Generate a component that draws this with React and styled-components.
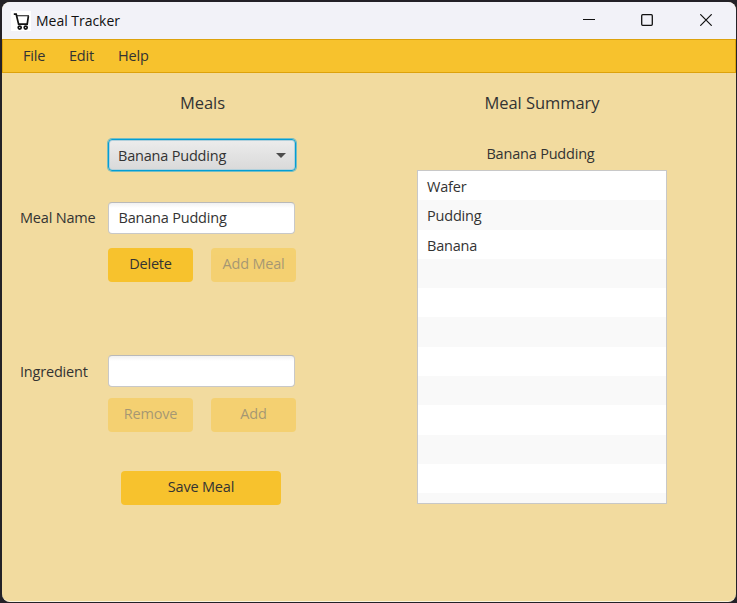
import React from "react";
import styled, { createGlobalStyle } from "styled-components";

const GlobalStyle = createGlobalStyle`
  * { box-sizing: border-box; }
  body { margin: 0; background: #232127; overflow: hidden; }
  button, input { font: inherit; color: inherit; letter-spacing: inherit; }
`;

const Desktop = styled.div`
  width: 737px;
  height: 603px;
  padding: 2px 1px 1px 2px;
  background: #232127;
  font-family: "Open Sans", "Noto Sans", sans-serif;
  font-size: 14.5px;
  line-height: 20px;
  letter-spacing: -0.2px;
  color: #333;
`;

const Window = styled.main`
  width: 734px;
  height: 600px;
  display: flex;
  flex-direction: column;
  border-radius: 8px;
  overflow: hidden;
  background: #f2db9f;
  border-bottom: 1px solid #faf3e0;
`;

const TitleBar = styled.header`
  height: 37px;
  flex: none;
  display: flex;
  align-items: center;
  padding: 0 1px 0 9px;
  background: #f2f2f8;
  color: #111;
`;

const AppIcon = styled.svg`
  width: 20px;
  height: 20px;
  margin-right: 5px;
  background: #fff;
`;

const WindowTitle = styled.span`
  flex: 1;
  font-size: 14px;
  letter-spacing: -0.03px;
`;

const WindowControl = styled.button`
  width: 58.5px;
  height: 37px;
  padding: 0 0 1px;
  border: 0;
  background: none;
  display: grid;
  place-items: center;
  svg { display: block; }
`;

const MenuBar = styled.nav`
  height: 34px;
  flex: none;
  display: flex;
  align-items: center;
  gap: 23px;
  padding: 0 20px;
  background: #f7c22d;
  border: 1px solid #dda20c;
`;

const MenuItem = styled.span`
  width: ${(p) => p.$width}px;
  white-space: nowrap;
`;

const Content = styled.div`
  flex: 1;
  display: flex;
  padding: 18px 0 0 18px;
`;

const Editor = styled.section`
  width: 276px;
  margin-right: 121px;
`;

const Heading = styled.h1`
  margin: 0;
  height: 24px;
  font-size: 16.5px;
  font-weight: 400;
  line-height: 24px;
  letter-spacing: -0.05px;
  text-align: center;
`;

const EditorHeading = styled(Heading)`
  margin: 0 0 24px 89px;
  width: 187px;
`;

const FormRow = styled.div`
  display: grid;
  grid-template-columns: 88px 188px;
  align-items: center;
  margin-bottom: ${(p) => p.$after}px;
`;

const Label = styled.label`
  white-space: nowrap;
  padding-top: ${(p) => p.$drop || 0}px;
`;

const Select = styled.div`
  grid-column: 2;
  width: 188px;
  height: 32px;
  display: flex;
  align-items: center;
  justify-content: space-between;
  padding: 1px 9px 0 9px;
  border: 1px solid #039ed3;
  border-radius: 4px;
  background: linear-gradient(#ececec, #d9d9d9);
  box-shadow: 0 0 0 1px #75bcc3, inset 0 0 0 1px #b0d0dc;
`;

const TextField = styled.input`
  width: 187px;
  height: 32px;
  padding: 0 9.5px 1px;
  border: 1px solid #c8c8c8;
  border-top-color: #b9b9b9;
  border-radius: 4px;
  outline: 0;
  background: linear-gradient(#f1f1f1, #fff 5px);
`;

const ButtonRow = styled.div`
  grid-column: 2;
  display: flex;
  gap: 18px;
`;

const Button = styled.button`
  width: ${(p) => p.$width || 85}px;
  height: 34px;
  flex: none;
  padding: 0 0 2px;
  border: 0;
  border-radius: 4px;
  background: #f7c22d;
  &:disabled { opacity: 0.4; color: #333; }
`;

const SaveArea = styled.div`
  padding-left: 101px;
`;

const Summary = styled.section`
  width: 250px;
`;

const SelectedMeal = styled.div`
  margin: 29px 0 6px;
  text-align: center;
  padding-right: 3px;
`;

const IngredientList = styled.ul`
  height: 334px;
  margin: 0;
  padding: 0;
  list-style: none;
  overflow: hidden;
  border: 1px solid #c8c8c8;
  background: #fff;
`;

const Ingredient = styled.li`
  height: 29.3px;
  padding: 6px 9px 0;
  &:nth-child(even) { background: #f9f9f9; }
`;

const ingredients = ["Wafer", "Pudding", "Banana", "", "", "", "", "", "", "", "", ""];

export default function App() {
  return (
    <>
      <GlobalStyle />
      <Desktop>
        <Window>
          <TitleBar>
            <AppIcon viewBox="0 0 20 20" fill="none" stroke="#111" strokeWidth="1.7">
              <path d="M2.8 3.2h2.4l2.4 9.9h8.6l1.2-8" />
              <path d="M6 4.8h12" strokeWidth="1.1" />
              <circle cx="8.7" cy="16.6" r="1.5" />
              <circle cx="14.7" cy="16.6" r="1.5" />
            </AppIcon>
            <WindowTitle>Meal Tracker</WindowTitle>
            <WindowControl aria-label="Minimize">
              <svg width="12" height="12" stroke="#111"><path d="M0 5.5h12" /></svg>
            </WindowControl>
            <WindowControl aria-label="Maximize">
              <svg width="12" height="12" fill="none" stroke="#111" strokeWidth="1.3"><rect x=".7" y=".7" width="10.6" height="10.6" rx="1" /></svg>
            </WindowControl>
            <WindowControl aria-label="Close">
              <svg width="12" height="12" stroke="#111" strokeWidth="1.2"><path d="M.3.3l11.4 11.4M11.7.3L.3 11.7" /></svg>
            </WindowControl>
          </TitleBar>
          <MenuBar>
            <MenuItem $width={23}>File</MenuItem>
            <MenuItem $width={26}>Edit</MenuItem>
            <MenuItem $width={31}>Help</MenuItem>
          </MenuBar>
          <Content>
            <Editor>
              <EditorHeading>Meals</EditorHeading>
              <FormRow $after={31}>
                <Select>
                  Banana Pudding
                  <svg width="10" height="5"><path d="M0 0h10L5 5z" fill="#4c4c4c" /></svg>
                </Select>
              </FormRow>
              <FormRow $after={14}>
                <Label>Meal Name</Label>
                <TextField defaultValue="Banana Pudding" />
              </FormRow>
              <FormRow $after={73}>
                <ButtonRow>
                  <Button>Delete</Button>
                  <Button disabled>Add Meal</Button>
                </ButtonRow>
              </FormRow>
              <FormRow $after={11}>
                <Label $drop={1}>Ingredient</Label>
                <TextField />
              </FormRow>
              <FormRow $after={39}>
                <ButtonRow>
                  <Button disabled>Remove</Button>
                  <Button disabled>Add</Button>
                </ButtonRow>
              </FormRow>
              <SaveArea>
                <Button $width={160}>Save Meal</Button>
              </SaveArea>
            </Editor>
            <Summary>
              <Heading>Meal Summary</Heading>
              <SelectedMeal>Banana Pudding</SelectedMeal>
              <IngredientList>
                {ingredients.map((name, i) => (
                  <Ingredient key={i}>{name}</Ingredient>
                ))}
              </IngredientList>
            </Summary>
          </Content>
        </Window>
      </Desktop>
    </>
  );
}
